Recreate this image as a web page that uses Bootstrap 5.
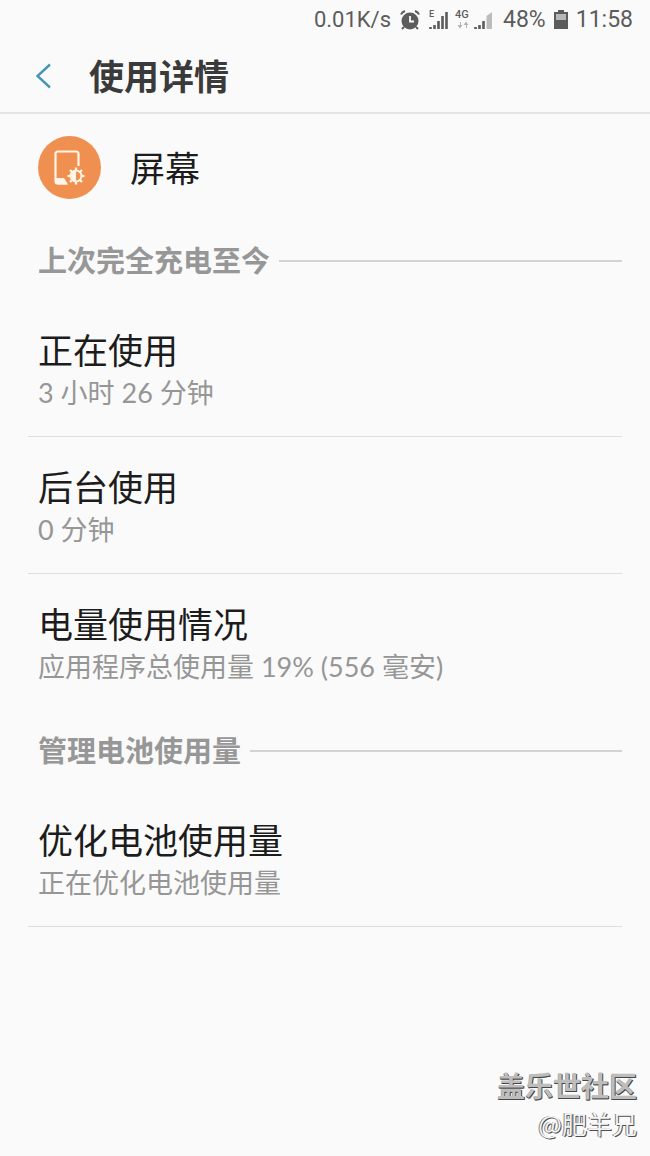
<!DOCTYPE html>
<html lang="zh-CN">
<head>
<meta charset="utf-8">
<meta name="viewport" content="width=device-width, initial-scale=1">
<title>使用详情</title>
<link href="https://cdn.jsdelivr.net/npm/bootstrap@5.3.0/dist/css/bootstrap.min.css" rel="stylesheet">
<style>
  body { background: #fafafa; color: #1c1c1c; font-family: Lato, "Noto Sans CJK SC", sans-serif; }
  .status { height: 40px; padding-right: 17px; color: #5c5c5c; font-family: Roboto, sans-serif; font-size: 23px; line-height: 40px; }
  .speed { font-size: 22px; }
  .appbar { height: 74px; padding-left: 36px; border-bottom: 2px solid #e4e4e4; }
  .appbar h1 { margin-left: 38px; font-size: 35px; line-height: 44px; font-weight: 700; color: #3a3a3a; }
  .app { padding: 22px 38px; gap: 29px; }
  .title { font-size: 35px; line-height: 44px; font-weight: 400; }
  .sub { font-size: 27px; line-height: 42px; color: #969696; }
  .section { height: 79px; padding: 0 28px 0 38px; gap: 9px; }
  .section h2 { font-size: 29px; line-height: 40px; font-weight: 700; color: #979797; }
  .rule { height: 2px; background: #d3d3d3; }
  .entry { margin: 0 28px; padding: 28px 10px 22px; border-bottom: 1px solid #dedede; }
  .entry.open { border-bottom-color: transparent; }
  .signature { padding: 0 13px 14px; line-height: 38px; font-family: "Noto Sans CJK SC", sans-serif; }
  .forum { font-size: 28px; font-weight: 700; color: #bdbdbd; text-shadow: 1px 1px 0 #484848, 0 1px 0 #484848; }
  .author { font-size: 25px; color: #f4f4f4; text-shadow: 1px 1px 0 #505050, -1px 0 0 #808080; }
</style>
</head>
<body>
<div class="d-flex flex-column min-vh-100">
  <div class="status d-flex justify-content-end align-items-center">
    <span class="speed">0.01K/s</span>
    <svg class="ms-2" width="22" height="22" viewBox="0 0 22 22" role="img" aria-label="闹钟">
      <circle cx="11" cy="12" r="8.500" fill="#5c5c5c"/>
      <path d="M2 5.500Q3 3 6 2M16 2q3 1 4 3.500M5 18l-2 2M17 18l2 2" fill="none" stroke="#5c5c5c" stroke-width="2"/>
      <path d="M11 7v5.500h4" fill="none" stroke="#fafafa" stroke-width="1.800"/>
    </svg>
    <svg class="ms-2" width="22" height="22" viewBox="0 0 22 22" role="img" aria-label="E 信号">
      <text x="0" y="8" font-family="Roboto" font-size="9" font-weight="500" fill="#5c5c5c">E</text>
      <path d="M1.500 20v-2M5.500 20v-4M9.500 20v-8M13.500 20V7M17.500 20V3" stroke="#5c5c5c" stroke-width="2.600"/>
    </svg>
    <svg class="ms-1" width="40" height="22" viewBox="0 0 40 22" role="img" aria-label="4G 信号">
      <text x="0" y="9" font-family="Roboto" font-size="11" font-weight="500" fill="#5c5c5c">4G</text>
      <path d="M5 13v3H2.500L5 19.500 7.500 16H6v-3zM11 19v-3H8.500L11 12.500 13.500 16H12v3z" fill="#b4b4b4"/>
      <path d="M20.500 20v-2M24.500 20v-4M28.500 20v-8" stroke="#5c5c5c" stroke-width="2.600"/>
      <path d="M31.500 20V7l5.500-4v17z" fill="#bcbcbc"/>
    </svg>
    <span class="ms-2">48%</span>
    <svg class="ms-2" width="14" height="20" viewBox="0 0 14 20" role="img" aria-label="电池">
      <path d="M0 2h4V0h6v2h4v17H0z" fill="#5c5c5c"/>
      <path d="M2 4h10v6H2z" fill="#b8b8b8"/>
    </svg>
    <span class="ms-2">11:58</span>
  </div>

  <header class="appbar d-flex align-items-center">
    <button type="button" class="btn p-0 border-0 d-flex" aria-label="返回">
      <svg width="15" height="26" viewBox="0 0 15 26"><path d="M14 1.500L1.500 13 14 24.500" fill="none" stroke="#4596b5" stroke-width="2.400"/></svg>
    </button>
    <h1 class="mb-0">使用详情</h1>
  </header>

  <main>
    <div class="app d-flex align-items-center">
      <svg width="63" height="63" viewBox="0 0 63 63" aria-hidden="true">
        <circle cx="31.500" cy="31.500" r="31.500" fill="#f09050"/>
        <path d="M40.500 30V18q0-2.500-2.500-2.500H20q-2.500 0-2.500 2.500v27q0 2.500 2.500 2.500h9" fill="none" stroke="#fff6e8" stroke-width="2.200"/>
        <path d="M17 42h9l4 6.500H20q-3 0-3-3z" fill="#fff6e8"/>
        <path d="M38 31.500v17M29.500 40h17M32 34l12 12M44 34L32 46" stroke="#fff6e8" stroke-width="2.200"/>
        <circle cx="38" cy="40" r="5.500" fill="#f09050" stroke="#fff6e8" stroke-width="2"/>
        <path d="M38 35a5 5 0 0 0 0 10z" fill="#fff6e8"/>
      </svg>
      <div class="title">屏幕</div>
    </div>

    <div class="section d-flex align-items-center">
      <h2 class="mb-0">上次完全充电至今</h2><div class="rule flex-grow-1"></div>
    </div>
    <div class="entry">
      <div class="title">正在使用</div>
      <div class="sub">3 小时 26 分钟</div>
    </div>
    <div class="entry">
      <div class="title">后台使用</div>
      <div class="sub">0 分钟</div>
    </div>
    <div class="entry open">
      <div class="title">电量使用情况</div>
      <div class="sub">应用程序总使用量 19% (556 毫安)</div>
    </div>

    <div class="section d-flex align-items-center">
      <h2 class="mb-0">管理电池使用量</h2><div class="rule flex-grow-1"></div>
    </div>
    <div class="entry">
      <div class="title">优化电池使用量</div>
      <div class="sub">正在优化电池使用量</div>
    </div>
  </main>

  <footer class="signature mt-auto text-end">
    <div class="forum">盖乐世社区</div>
    <div class="author">@肥羊兄</div>
  </footer>
</div>
<script src="https://cdn.jsdelivr.net/npm/bootstrap@5.3.0/dist/js/bootstrap.bundle.min.js"></script>
</body>
</html>
